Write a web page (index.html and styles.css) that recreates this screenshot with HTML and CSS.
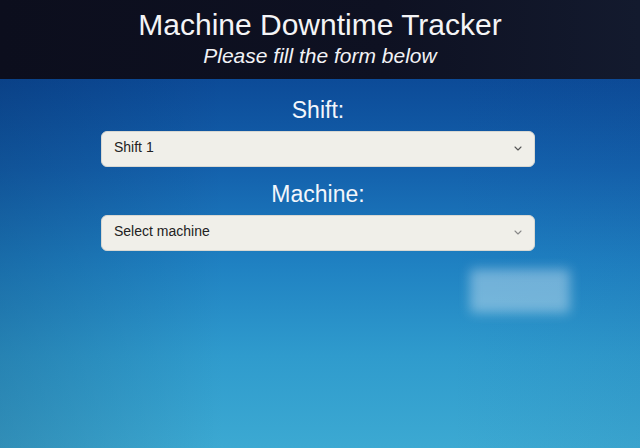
FILE: index.html
```html
<!DOCTYPE html>
<html lang="en">
<head>
<meta charset="utf-8">
<title>Machine Downtime Tracker</title>
<link rel="stylesheet" href="styles.css">
</head>
<body>
<header class="topbar">
  <h1 class="title">Machine Downtime Tracker</h1>
  <p class="subtitle">Please fill the form below</p>
</header>
<main class="page">
  <form class="form">
    <label class="field-label" for="shift">Shift:</label>
    <div class="select-wrap">
      <select id="shift" class="select">
        <option>Shift 1</option>
        <option>Shift 2</option>
        <option>Shift 3</option>
      </select>
      <svg class="chev" width="8" height="5" viewBox="0 0 8 5"><path d="M1 1l3 3 3-3" fill="none" stroke="#555" stroke-width="1.1" stroke-linecap="round" stroke-linejoin="round"/></svg>
    </div>
    <label class="field-label" for="machine">Machine:</label>
    <div class="select-wrap">
      <select id="machine" class="select">
        <option>Select machine</option>
      </select>
      <svg class="chev" width="8" height="5" viewBox="0 0 8 5"><path d="M1 1l3 3 3-3" fill="none" stroke="#888" stroke-width="1.1" stroke-linecap="round" stroke-linejoin="round"/></svg>
    </div>
  </form>
  <div class="glare"></div>
</main>
</body>
</html>
```
FILE: styles.css
```css
* { box-sizing: border-box; }
html, body { margin: 0; padding: 0; height: 100%; }
body {
  font-family: "Liberation Sans", Arial, sans-serif;
  display: flex;
  flex-direction: column;
  background: #0c4a97;
}
.topbar {
  height: 79px;
  background: linear-gradient(90deg, #0c0e1d 0%, #0e1122 60%, #131a2e 100%);
  color: #fff;
  text-align: center;
  padding-top: 8px;
}
.title {
  margin: 0;
  font-size: 30px;
  line-height: 34px;
  font-weight: normal;
  color: #f4f4f6;
}
.subtitle {
  margin: 2px 0 0;
  font-size: 21px;
  line-height: 24px;
  font-style: italic;
  color: #f2f2f5;
}
.page {
  position: relative;
  flex: 1;
  padding-top: 17px;
  background:
    linear-gradient(90deg, rgba(0,20,60,0.18) 0%, rgba(0,0,0,0) 35%, rgba(0,0,0,0) 70%, rgba(20,60,120,0.06) 100%),
    linear-gradient(180deg, #0c4b98 0%, #1462ad 25%, #1f81c2 50%, #2f9bcd 75%, #3ca9d2 100%);
  overflow: hidden;
}
.form {
  width: 434px;
  margin: 0 0 0 101px;
  display: flex;
  flex-direction: column;
}
.field-label {
  display: block;
  text-align: center;
  font-size: 23px;
  line-height: 28px;
  color: #f3f6fb;
  margin-bottom: 7px;
}
.select-wrap {
  position: relative;
  height: 36px;
  margin-bottom: 13px;
}
.select {
  appearance: none;
  -webkit-appearance: none;
  width: 100%;
  height: 36px;
  border: 1px solid #d8d8d2;
  border-radius: 6px;
  background: #f0efe9;
  font-family: "Liberation Sans", Arial, sans-serif;
  font-size: 14px;
  color: #222;
  padding: 0 12px 5px 12px;
  outline: none;
}
.chev {
  position: absolute;
  right: 13px;
  top: 15px;
  pointer-events: none;
}
.glare {
  position: absolute;
  left: 470px;
  top: 190px;
  width: 100px;
  height: 44px;
  background: rgba(235,245,250,0.4);
  filter: blur(6px);
  border-radius: 4px;
}
```
